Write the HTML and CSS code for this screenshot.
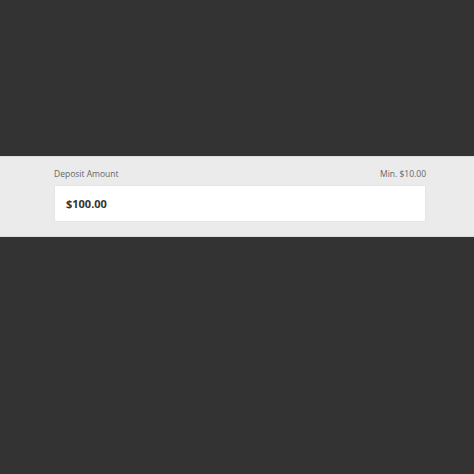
FILE: index.html
```html
<!DOCTYPE html>
<html>
<head>
<meta charset="utf-8">
<link rel="stylesheet" href="styles.css">
</head>
<body>
<div class="page">
  <section class="band">
    <div class="label-row">
      <span class="label">Deposit Amount</span>
      <span class="min">Min. $10.00</span>
    </div>
    <div class="input">$100.00</div>
  </section>
</div>
</body>
</html>
```
FILE: styles.css
```css
html, body {
  margin: 0;
  padding: 0;
  background: #333333;
  font-family: "Open Sans", "Noto Sans", sans-serif;
}
.page {
  width: 474px;
  height: 474px;
  padding-top: 156px;
  box-sizing: border-box;
}
.band {
  background: #ebebeb;
  border-top: 1px solid #dcdcdc;
  border-bottom: 1px solid #dcdcdc;
  padding: 11px 48px 14px 54px;
  display: flex;
  flex-direction: column;
  gap: 5px;
}
.label-row {
  display: flex;
  justify-content: space-between;
  font-size: 8.5px;
  line-height: 12px;
  color: #666666;
}
.input {
  background: #ffffff;
  border: 1px solid #e6e6e6;
  height: 35px;
  box-sizing: content-box;
  padding: 0 11px;
  display: flex;
  align-items: center;
  font-size: 11px;
  font-weight: 700;
  color: #333333;
}
```
